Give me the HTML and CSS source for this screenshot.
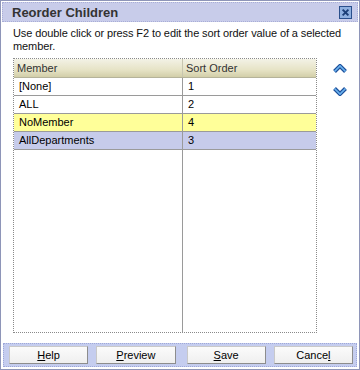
FILE: index.html
```html
<!DOCTYPE html>
<html lang="en">

<head>
    <meta charset="UTF-8">
    <title>Reorder Children</title>
    <link rel="stylesheet" href="styles.css">
</head>

<body>
    <div class="dialog">
        <div class="titlebar">
            <span class="title">Reorder Children</span>
            <span class="close">
                <svg width="12" height="12" viewBox="0 0 12 12">
                    <path d="M3 3 L9 9 M9 3 L3 9" stroke="#1c3f78" stroke-width="2.4" stroke-linecap="square" />
                </svg>
            </span>
        </div>
        <p class="desc">Use double click or press F2 to edit the sort order value of a selected member.</p>
        <div class="main">
            <div class="grid">
                <table>
                    <thead>
                        <tr>
                            <th class="col-member">Member</th>
                            <th class="col-order">Sort Order</th>
                        </tr>
                    </thead>
                    <tbody>
                        <tr>
                            <td>[None]</td>
                            <td>1</td>
                        </tr>
                        <tr>
                            <td>ALL</td>
                            <td>2</td>
                        </tr>
                        <tr class="editing">
                            <td>NoMember</td>
                            <td>4</td>
                        </tr>
                        <tr class="selected">
                            <td>AllDepartments</td>
                            <td>3</td>
                        </tr>
                        <tr class="filler">
                            <td></td>
                            <td></td>
                        </tr>
                    </tbody>
                </table>
            </div>
            <div class="movers">
                <!-- move up -->
                <svg width="14" height="10" viewBox="0 0 14 10">
                    <path d="M1.5 7.5 L7 2 L12.5 7.5" fill="none" stroke="#1d4f9a" stroke-width="4" stroke-linejoin="miter" />
                    <path d="M1.5 7.5 L7 2 L12.5 7.5" fill="none" stroke="#6cb4f0" stroke-width="1.6" />
                </svg>
                <!-- move down -->
                <svg width="14" height="10" viewBox="0 0 14 10">
                    <path d="M1.5 2.5 L7 8 L12.5 2.5" fill="none" stroke="#1d4f9a" stroke-width="4" stroke-linejoin="miter" />
                    <path d="M1.5 2.5 L7 8 L12.5 2.5" fill="none" stroke="#6cb4f0" stroke-width="1.6" />
                </svg>
            </div>
        </div>
        <div class="footer">
            <button class="btn"><u>H</u>elp</button>
            <button class="btn"><u>P</u>review</button>
            <button class="btn"><u>S</u>ave</button>
            <button class="btn">Cance<u>l</u></button>
        </div>
    </div>
</body>

</html>
```
FILE: styles.css
```css
body {
    margin: 0;
    background: #ffffff;
    font-family: "Liberation Sans", Arial, sans-serif;
    font-size: 11px;
    color: #000;
}

.dialog {
    width: 358px;
    height: 368px;
    border: 1px solid #8e95b8;
    background: #fff;
    display: flex;
    flex-direction: column;
}

.titlebar {
    height: 19px;
    margin: 1px 1px 0;
    border: 1px dotted #a9aed6;
    background: #c8ccea;
    display: flex;
    align-items: center;
    justify-content: space-between;
    padding: 0 5px 0 9px;
}

.title {
    font-weight: bold;
    font-size: 13px;
    color: #333333;
}

.close {
    width: 11px;
    height: 11px;
    border: 1px solid #2a4f8c;
    background: #8fb0e0;
    display: flex;
    align-items: center;
    justify-content: center;
}

.close svg {
    width: 9px;
    height: 9px;
}

.desc {
    margin: 5px 14px 0 12px;
    line-height: 13px;
    color: #111;
    letter-spacing: -0.1px;
}

.main {
    display: flex;
    margin-top: 5px;
    padding-left: 12px;
}

.grid {
    width: 302px;
    height: 273px;
    border: 1px dotted #8a8a8a;
}

table {
    border-collapse: collapse;
    width: 100%;
    height: 100%;
}

th {
    height: 18px;
    padding: 0 0 0 3px;
    text-align: left;
    font-weight: normal;
    color: #333;
    background: linear-gradient(#f3f2e6, #e6e3c6 60%, #d2cea8);
    border-bottom: 1px solid #b5b39a;
}

.col-member {
    width: 165px;
    border-right: 1px solid #c8c6b0;
}

td {
    height: 17px;
    padding: 0 0 0 5px;
    border-bottom: 1px solid #9a9a9a;
    line-height: 17px;
}

td:first-child {
    border-right: 1px solid #9a9a9a;
}

tr.editing td {
    background: #ffff99;
}

tr.selected td {
    background: #c6cbea;
}

tr.filler td {
    height: auto;
    border-bottom: none;
}

.movers {
    display: flex;
    flex-direction: column;
    align-items: center;
    gap: 12px;
    padding: 6px 0 0 16px;
}

.footer {
    margin: 10px 2px 2px;
    height: 23px;
    background: #c5cdef;
    border: 1px dotted #9ea8d8;
    display: flex;
    align-items: center;
    gap: 8px;
    padding: 0 3px 0 5px;
}

.btn {
    width: 80px;
    height: 18px;
    padding: 0;
    font-family: "Liberation Sans", Arial, sans-serif;
    font-size: 11px;
    color: #000;
    background: linear-gradient(#fbfbfb, #efefef);
    border: 1px solid #c9c9c9;
    border-right-color: #8d8d8d;
    border-bottom-color: #8d8d8d;
}

.btn:nth-child(3) {
    margin-left: 3px;
}
```
